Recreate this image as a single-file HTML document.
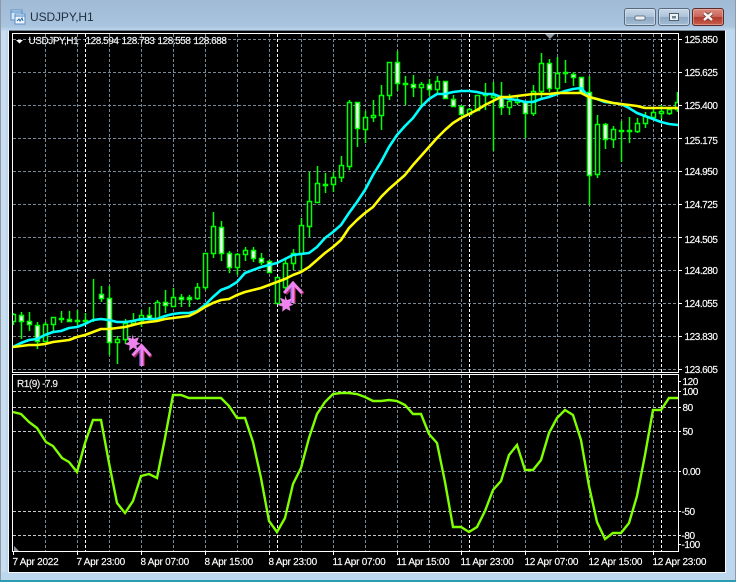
<!DOCTYPE html>
<html><head><meta charset="utf-8"><style>
html,body{margin:0;padding:0;width:736px;height:582px;overflow:hidden;background:#bcd7ee}
svg{position:absolute;left:0;top:0}
text{font-family:"Liberation Sans",sans-serif}
.a{font-size:10px;letter-spacing:-.45px;fill:#fff;stroke:#fff;stroke-width:.15px}
.d{font-size:10px;letter-spacing:-.25px;fill:#fff;stroke:#fff;stroke-width:.15px}
.h{font-size:10px;letter-spacing:-.45px;fill:#f4f4f4;stroke:#f4f4f4;stroke-width:.15px}
</style></head><body>
<svg width="736" height="582" viewBox="0 0 736 582">
<defs>
<linearGradient id="t" x1="0" y1="0" x2="0" y2="1"><stop offset="0" stop-color="#a0bad5"/><stop offset=".85" stop-color="#a9c4de"/><stop offset="1" stop-color="#c2daef"/></linearGradient>
<linearGradient id="b" x1="0" y1="0" x2="0" y2="1"><stop offset="0" stop-color="#c9d8e8"/><stop offset=".48" stop-color="#aec3d9"/><stop offset=".52" stop-color="#8ea9c4"/><stop offset="1" stop-color="#a5bdd4"/></linearGradient>
<linearGradient id="r" x1="0" y1="0" x2="0" y2="1"><stop offset="0" stop-color="#dc8d80"/><stop offset=".48" stop-color="#c9665a"/><stop offset=".52" stop-color="#b23a2b"/><stop offset="1" stop-color="#c9604f"/></linearGradient>
<clipPath id="m"><rect x="13" y="34" width="665" height="338"/></clipPath>
<clipPath id="s"><rect x="13" y="375" width="665" height="176"/></clipPath>
</defs>

<rect width="736" height="582" fill="#bcd7ee"/>
<rect width="736" height="31" fill="url(#t)"/>
<rect x="0" y="0" width="1" height="582" fill="#8f9aa6"/>
<rect x="735" y="0" width="1" height="582" fill="#8f9aa6"/>
<rect x="1" y="31" width="5" height="541" fill="#c9deef"/>
<rect x="8" y="31" width="718" height="542" fill="#f5f8fb"/>
<rect x="9" y="31" width="716" height="541" fill="#000"/>
<rect x="9" y="30" width="716" height="1" fill="#6f8193"/>
<rect x="0" y="580" width="736" height="2" fill="#2b9db3"/>

<!-- title -->
<g>
<rect x="11" y="10" width="11" height="10" fill="#d6e8f7" stroke="#5c8fc4"/>
<rect x="15" y="14" width="10" height="10" fill="#eef6fc" stroke="#5c8fc4"/>
<path d="M11 12h11M15 16h10" stroke="#3f7fc0" fill="none"/>
<path d="M17 21l2-2 1 2 2-3 1 3" stroke="#2a6aa8" fill="none"/>
</g>
<text x="30" y="21" fill="#1f2f40" style="font-size:12px;letter-spacing:-.1px">USDJPY,H1</text>

<rect x="624.5" y="8.5" width="31" height="17" rx="2.5" fill="url(#b)" stroke="#56697f"/>
<rect x="625.5" y="9.5" width="29" height="15" rx="2" fill="none" stroke="#dce7f1" stroke-opacity=".6"/>
<rect x="635" y="16" width="10" height="4" rx="1" fill="#eef2f6" stroke="#4e5f72" stroke-width=".8"/>
<rect x="658.5" y="8.5" width="31" height="17" rx="2.5" fill="url(#b)" stroke="#56697f"/>
<rect x="659.5" y="9.5" width="29" height="15" rx="2" fill="none" stroke="#dce7f1" stroke-opacity=".6"/>
<rect x="669.5" y="13.5" width="9" height="7" fill="#eef2f6" stroke="#4e5f72"/>
<rect x="672" y="16" width="4" height="2.5" fill="#6f8093"/>
<rect x="692.5" y="8.5" width="31" height="17" rx="2.5" fill="url(#r)" stroke="#5b2a2a"/>
<rect x="693.5" y="9.5" width="29" height="15" rx="2" fill="none" stroke="#eec0b8" stroke-opacity=".5"/>
<path d="M704 13l8 7M712 13l-8 7" stroke="#5f2a24" stroke-width="4"/>
<path d="M704 13l8 7M712 13l-8 7" stroke="#f4f1ee" stroke-width="2.6"/>

<!-- grid main -->
<g shape-rendering="crispEdges" fill="none">
<g stroke="#778899" stroke-dasharray="3 2">
<path clip-path="url(#m)" d="M13 39.5H678M13 72.5H678M13 105.5H678M13 138.5H678M13 171.5H678M13 204.5H678M13 237.5H678M13 270.5H678M13 303.5H678M13 336.5H678M13 369.5H678"/>
<path d="M45.5 34V372M77.5 34V372M109.5 34V372M141.5 34V372M173.5 34V372M205.5 34V372M237.5 34V372M269.5 34V372M301.5 34V372M333.5 34V372M365.5 34V372M397.5 34V372M429.5 34V372M461.5 34V372M493.5 34V372M525.5 34V372M557.5 34V372M589.5 34V372M621.5 34V372M653.5 34V372"/>
<path d="M45.5 375V551M77.5 375V551M109.5 375V551M141.5 375V551M173.5 375V551M205.5 375V551M237.5 375V551M269.5 375V551M301.5 375V551M333.5 375V551M365.5 375V551M397.5 375V551M429.5 375V551M461.5 375V551M493.5 375V551M525.5 375V551M557.5 375V551M589.5 375V551M621.5 375V551M653.5 375V551"/>
<path d="M13 471.5H678"/>
</g>
<path stroke="#c8c8c8" stroke-dasharray="3 2" d="M13 391.5H678M13 407.5H678M13 431.5H678M13 511.5H678M13 535.5H678"/>
<path stroke="#fff" stroke-dasharray="3 2" d="M85.5 34V372M277.5 34V372M469.5 34V372M661.5 34V372M85.5 375V551M277.5 375V551M469.5 375V551M661.5 375V551"/>
</g>

<!-- candles -->
<g clip-path="url(#m)" stroke="#00ff00" stroke-width="1.5">
<path fill="none" d="M13.5 313V325M21.5 312V339M29.5 312V331M37.5 322V349M45.5 322V342M53.5 317V332M61.5 311V323M69.5 311V321M77.5 310V325M85.5 313V325M93.5 279V322M101.5 286V302M109.5 286V355M117.5 336V364M125.5 319V344M133.5 313V325M141.5 310V327M149.5 307V320M157.5 300V320M165.5 290V313M173.5 288V307M181.5 294V307M189.5 295V307M197.5 283V300M205.5 253V290M213.5 212V258M221.5 221V261M229.5 251V273M237.5 253V275M245.5 247V261M253.5 247V262M261.5 253V265M269.5 260V272M277.5 277V303M285.5 258V292M293.5 249V270M301.5 218V273M309.5 172V237M317.5 166V203M325.5 173V193M333.5 172V192M341.5 156V182M349.5 100V170M357.5 102V147M365.5 111V143M373.5 100V122M381.5 85V130M389.5 62V100M397.5 51V91M405.5 76V105M413.5 75V97M421.5 82V105M429.5 79V96M437.5 76V93M445.5 81V99M453.5 95V107M461.5 105V115M469.5 108V115M477.5 95V111M485.5 83V110M493.5 82V151M501.5 82V115M509.5 94V115M517.5 97V105M525.5 102V138M533.5 85V116M541.5 53V100M549.5 59V92M557.5 57V93M565.5 60V83M573.5 72V86M581.5 77V93M589.5 76V205M597.5 115V178M605.5 123V149M613.5 126V148M621.5 121V162M629.5 117V143M637.5 118V133M645.5 112V128M653.5 109V119M661.5 105V119M669.5 107V115M677.5 92V112"/>
<path fill="#000" d="M11.5 314.5h4v7h-4zM43.5 324.5h4v17h-4zM51.5 317.5h4v7h-4zM59.5 318.5h4v1h-4zM75.5 320.5h4v1h-4zM83.5 320.5h4v1h-4zM115.5 339.5h4v3h-4zM123.5 323.5h4v16h-4zM131.5 320.5h4v3h-4zM139.5 315.5h4v5h-4zM155.5 302.5h4v17h-4zM171.5 297.5h4v9h-4zM195.5 287.5h4v11h-4zM203.5 253.5h4v34h-4zM211.5 226.5h4v27h-4zM235.5 254.5h4v13h-4zM243.5 250.5h4v4h-4zM275.5 277.5h4v26h-4zM283.5 263.5h4v24h-4zM291.5 253.5h4v10h-4zM299.5 225.5h4v28h-4zM307.5 201.5h4v25h-4zM315.5 183.5h4v19h-4zM323.5 184.5h4v1h-4zM331.5 177.5h4v7h-4zM339.5 165.5h4v12h-4zM347.5 102.5h4v64h-4zM363.5 117.5h4v12h-4zM371.5 115.5h4v2h-4zM379.5 95.5h4v20h-4zM387.5 62.5h4v33h-4zM403.5 83.5h4v1h-4zM419.5 84.5h4v3h-4zM435.5 81.5h4v8h-4zM467.5 109.5h4v5h-4zM475.5 95.5h4v15h-4zM483.5 94.5h4v1h-4zM491.5 95.5h4v2h-4zM507.5 101.5h4v6h-4zM515.5 100.5h4v2h-4zM531.5 91.5h4v22h-4zM539.5 63.5h4v28h-4zM555.5 73.5h4v15h-4zM563.5 72.5h4v1h-4zM595.5 124.5h4v50h-4zM611.5 129.5h4v10h-4zM619.5 130.5h4v1h-4zM627.5 130.5h4v1h-4zM635.5 123.5h4v8h-4zM643.5 116.5h4v7h-4zM651.5 112.5h4v5h-4zM659.5 111.5h4v2h-4zM667.5 109.5h4v4h-4zM675.5 102.5h4v7h-4z"/>
<path fill="#fff" d="M19.5 315.5h4v6h-4zM27.5 321.5h4v3h-4zM35.5 325.5h4v16h-4zM67.5 319.5h4v2h-4zM99.5 294.5h4v4h-4zM107.5 298.5h4v44h-4zM147.5 315.5h4v4h-4zM163.5 302.5h4v3h-4zM179.5 297.5h4v2h-4zM187.5 297.5h4v2h-4zM219.5 227.5h4v26h-4zM227.5 253.5h4v14h-4zM251.5 250.5h4v8h-4zM259.5 258.5h4v4h-4zM267.5 261.5h4v11h-4zM355.5 102.5h4v26h-4zM395.5 62.5h4v21h-4zM411.5 84.5h4v3h-4zM427.5 84.5h4v5h-4zM443.5 81.5h4v17h-4zM451.5 99.5h4v7h-4zM459.5 106.5h4v8h-4zM499.5 97.5h4v10h-4zM523.5 102.5h4v11h-4zM547.5 63.5h4v25h-4zM571.5 74.5h4v3h-4zM579.5 77.5h4v15h-4zM587.5 92.5h4v83h-4zM603.5 124.5h4v15h-4z"/>
</g>

<!-- MAs -->
<g clip-path="url(#m)" fill="none" stroke-width="2.6" stroke-linejoin="round">
<polyline stroke="#00ffff" points="13,347 21,343 29,340 37,339 45,335 53,332 61,331 69,328 77,327 85,324 93,320 101,319 109,320 117,322 125,322 133,321 141,319 149,319 157,319 165,316 173,314 181,313 189,313 197,311 205,305 213,297 221,290 229,287 237,282 245,273 253,270 261,267 269,265 277,263 285,259 293,255 301,254 309,253 317,247 325,238 333,232 341,225 349,213 357,202 365,190 373,175 381,162 389,147 397,135 405,126 413,118 421,107 429,99 437,94 445,94 453,92 461,91 469,91 477,92 485,94 493,94 501,97 509,99 517,100 525,102 533,102 541,99 549,97 557,94 565,91 573,89 581,88 589,97 597,99 605,102 613,103 621,104 629,108 637,113 645,116 653,119 661,122 669,124 678,125"/>
<polyline stroke="#ffff00" points="13,347 21,346 29,345 37,345 45,344 53,342 61,341 69,340 77,337 85,335 93,332 101,329 109,329 117,328 125,327 133,325 141,323 149,322 157,321 165,319 173,318 181,317 189,316 197,312 205,307 213,303 221,300 229,299 237,295 245,292 253,290 261,288 269,285 277,282 285,279 293,275 301,272 309,267 317,260 325,253 333,247 341,240 349,228 357,220 365,213 373,207 381,197 389,189 397,182 405,175 413,165 421,156 429,147 437,138 445,130 453,123 461,118 469,114 477,110 485,105 493,101 501,97 509,97 517,96 525,95 533,94 541,94 549,94 557,93 565,93 573,93 581,93 589,97 597,99 605,101 613,103 621,104 629,105 637,106 645,108 653,108 661,108 669,108 678,108"/>
</g>

<!-- markers -->
<g fill="none" stroke-linejoin="miter">
<path d="M133 356l8.500-10 9 10" stroke="#a02a5a" stroke-width="3.200" transform="translate(.8 .8)"/>
<path d="M140 349v17" stroke="#7060d0" stroke-width="1.500"/>
<path d="M144 349v17" stroke="#b02040" stroke-width="1.400"/>
<path d="M142 347v19" stroke="#ee82ee" stroke-width="3"/>
<path d="M132.500 355.500l9-10 9 10" stroke="#ee82ee" stroke-width="3"/>
<path d="M285 293l8.500-9 9 9" stroke="#a02a5a" stroke-width="3.200" transform="translate(.8 .8)"/>
<path d="M291 286v17" stroke="#7060d0" stroke-width="1.500"/>
<path d="M295 286v17" stroke="#b02040" stroke-width="1.400"/>
<path d="M293 284v19" stroke="#ee82ee" stroke-width="3"/>
<path d="M284 293l9-10 9 10" stroke="#ee82ee" stroke-width="3"/>
</g>
<path fill="#ee82ee" d="M132 334.500l2 4.500 5-1.800-2 4.800 3.600 1.800-4.200 1.400 1 4.800-4.200-2.400-4 3.200.4-5.300-5-1.500 4.500-2.200-2.100-5 5.100 1.900z"/>
<path fill="#ee82ee" d="M285 295.500l2 4.500 5-1.800-2 4.800 3.600 1.800-4.200 1.400 1 4.800-4.200-2.400-4 3.200.4-5.300-5-1.500 4.500-2.200-2.100-5 5.100 1.900z"/>

<!-- sub line -->
<polyline clip-path="url(#s)" fill="none" stroke="#7fff00" stroke-width="2.400" points="13,412 21,414 29,422 37,428 46,442 53,446 62,458 69,462 77,472 85,443 93,420 101,420 109,463 117,503 125,513 133,501 141,476 149,474 157,478 165,438 173,395 181,395 189,398 197,398 205,398 213,398 221,398 229,406 237,418 245,418 253,442 261,478 269,521 277,532 285,518 293,484 301,468 309,438 317,414 325,402 333,394 341,393 349,393 357,394 365,397 373,401 381,401 389,400 397,401 405,405 413,414 421,414 429,434 437,443 445,482 453,527 461,527 469,532 477,527 485,511 493,490 501,481 509,455 517,445 525,470 533,470 541,460 549,433 557,418 565,410 573,415 581,440 589,486 597,522 605,539 613,533 621,533 629,523 637,496 645,455 653,410 661,410 669,398 678,398"/>

<!-- frames -->
<g shape-rendering="crispEdges" fill="none" stroke="#fff">
<path d="M12.500 33.500H678.500V372.500H12.500Z"/>
<path d="M12.500 374.500H678.500V551.500H12.500Z"/>
<path d="M678 39.500h4M678 72.500h4M678 105.500h4M678 138.500h4M678 171.500h4M678 204.500h4M678 237.500h4M678 270.500h4M678 303.500h4M678 336.500h4M678 369.500h4M678 381.500h3M678 391.500h3M678 407.500h3M678 431.500h3M678 471.500h3M678 511.500h3M678 535.500h3M678 544.500h3"/>
<path d="M13.500 551v4M77.500 551v4M141.500 551v4M205.500 551v4M269.500 551v4M333.500 551v4M397.500 551v4M461.500 551v4M525.500 551v4M589.500 551v4M653.500 551v4"/>
</g>
<path d="M545 34h10l-5 5z" fill="#8a95a2"/>
<path d="M14 546l5 5h-5z" fill="#8a95a2"/>
<path d="M16 40h7l-3.500 3.500z" fill="#fff"/>

<!-- top text -->
<text class="h" x="28.500" y="44">USDJPY,H1</text>
<text class="h" x="85.500" y="44">128.594</text>
<text class="h" x="121.500" y="44">128.783</text>
<text class="h" x="157.500" y="44">128.558</text>
<text class="h" x="193.500" y="44">128.688</text>
<text class="h" x="17" y="387">R1(9) -7.9</text>

<!-- price labels -->
<text class="a" x="684.500" y="43">125.850</text>
<text class="a" x="684.500" y="76">125.625</text>
<text class="a" x="684.500" y="109">125.400</text>
<text class="a" x="684.500" y="144">125.175</text>
<text class="a" x="684.500" y="175">124.950</text>
<text class="a" x="684.500" y="208">124.725</text>
<text class="a" x="684.500" y="243">124.505</text>
<text class="a" x="684.500" y="274">124.280</text>
<text class="a" x="684.500" y="307">124.055</text>
<text class="a" x="684.500" y="340">123.830</text>
<text class="a" x="684.500" y="373">123.605</text>
<text class="a" x="682.500" y="385">120</text>
<text class="a" x="682.500" y="395">100</text>
<text class="a" x="682.500" y="411">80</text>
<text class="a" x="682.500" y="435">50</text>
<text class="a" x="682.500" y="475">0.00</text>
<text class="a" x="681.500" y="515">-50</text>
<text class="a" x="681.500" y="539">-80</text>
<text class="a" x="681.500" y="548">-100</text>

<!-- date labels -->
<text class="d" x="12.500" y="565">7 Apr 2022</text>
<text class="d" x="76.500" y="565">7 Apr 23:00</text>
<text class="d" x="140.500" y="565">8 Apr 07:00</text>
<text class="d" x="204.500" y="565">8 Apr 15:00</text>
<text class="d" x="268.500" y="565">8 Apr 23:00</text>
<text class="d" x="332.500" y="565">11 Apr 07:00</text>
<text class="d" x="396.500" y="565">11 Apr 15:00</text>
<text class="d" x="460.500" y="565">11 Apr 23:00</text>
<text class="d" x="524.500" y="565">12 Apr 07:00</text>
<text class="d" x="588.500" y="565">12 Apr 15:00</text>
<text class="d" x="652.500" y="565">12 Apr 23:00</text>
</svg>
</body></html>
